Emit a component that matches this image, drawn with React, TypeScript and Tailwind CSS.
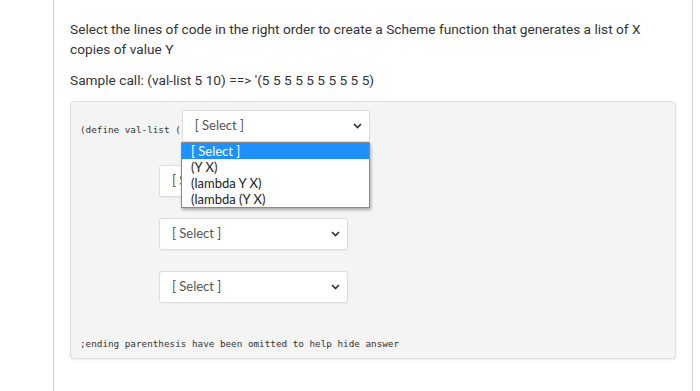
import React from "react";

function Chevron() {
  return (
    <svg width="9" height="6" viewBox="0 0 9 6" className="shrink-0">
      <path d="M1 1 L4.5 4.5 L8 1" fill="none" stroke="#333" strokeWidth="1.7" />
    </svg>
  );
}

function SelectBox({ width }: { width: string }) {
  return (
    <div
      className={`flex h-[32px] ${width} items-center justify-between rounded-[3px] border border-[#dcdcdc] bg-white pl-[12px] pr-[7px] text-[13px] text-[#555] shadow-[0_1px_1px_rgba(0,0,0,0.04)]`}
      style={{ fontFamily: "Lato, 'Open Sans', sans-serif" }}
    >
      <span>[ Select ]</span>
      <Chevron />
    </div>
  );
}

export default function App() {
  return (
    <div className="h-[391px] w-[700px] overflow-hidden bg-white">
      <div className="ml-[53px] h-full w-[640px] border-x border-[#cfcfcf] bg-white pl-[16px] pr-[16px] pt-[20px]">
        <div
          className="text-[13.7px] leading-[19.5px] text-[#333]"
          style={{ fontFamily: "Roboto, 'Liberation Sans', sans-serif" }}
        >
          <p className="w-[580px]">
            Select the lines of code in the right order to create a Scheme function that generates a list of X copies of value Y
          </p>
          <p className="mt-[12px]">Sample call: (val-list 5 10) ==&gt; '(5 5 5 5 5 5 5 5 5 5)</p>
        </div>
        <div className="relative mt-[10px] h-[258px] w-[606px] rounded-[4px] border border-[#dedede] bg-[#f4f4f4] px-[9px] pt-[8px] shadow-[0_1px_2px_rgba(0,0,0,0.08)]">
          <div
            className="flex items-start"
            style={{ fontFamily: "'DejaVu Sans Mono', monospace" }}
          >
            <span className="mt-[14px] text-[9.3px] leading-[12px] text-[#333]">(define val-list (</span>
            <div className="ml-[1px]">
              <SelectBox width="w-[188px]" />
            </div>
          </div>
          <div className="mt-[23px] flex flex-col gap-[21px] pl-[79px]">
            <SelectBox width="w-[189px]" />
            <SelectBox width="w-[189px]" />
            <SelectBox width="w-[189px]" />
          </div>
          <div
            className="mt-[34px] text-[9.3px] text-[#333]"
            style={{ fontFamily: "'DejaVu Sans Mono', monospace" }}
          >
            ;ending parenthesis have been omitted to help hide answer
          </div>
          <div
            className="absolute left-[110px] top-[40px] w-[189px] border border-[#8a8a8a] bg-white text-[13px] leading-[16px] text-[#222] shadow-[1px_2px_3px_rgba(0,0,0,0.3)]"
            style={{ fontFamily: "Lato, 'Open Sans', sans-serif" }}
          >
            <div className="bg-[#1e90ff] pl-[9px] text-white">[ Select ]</div>
            <div className="pl-[9px]">(Y X)</div>
            <div className="pl-[9px]">(lambda Y X)</div>
            <div className="pl-[9px]">(lambda (Y X)</div>
          </div>
        </div>
      </div>
    </div>
  );
}
